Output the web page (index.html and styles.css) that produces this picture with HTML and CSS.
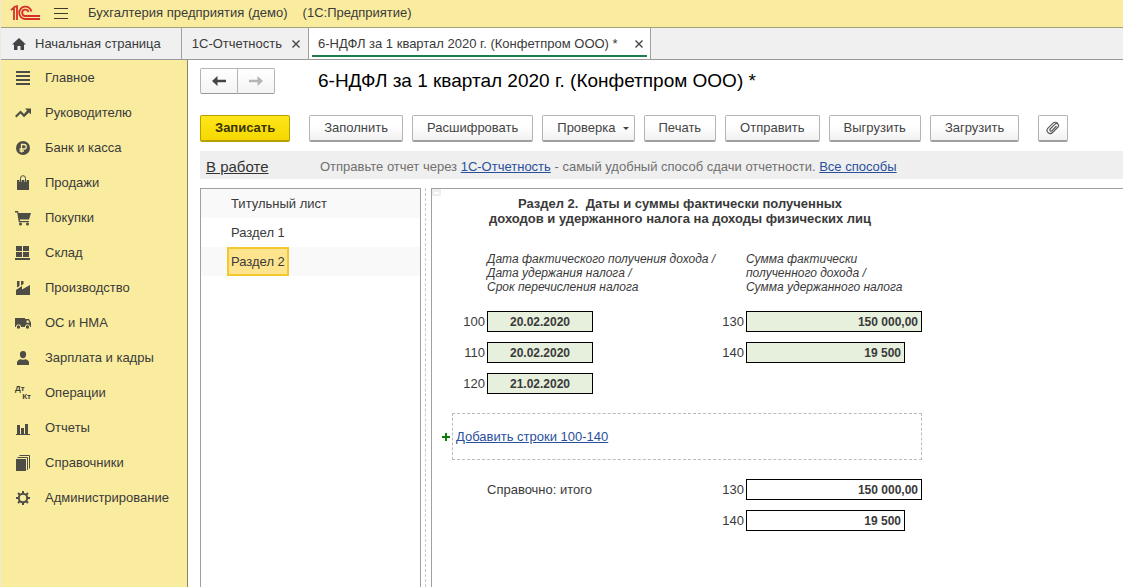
FILE: index.html
```html
<!DOCTYPE html>
<html lang="ru">
<head>
<meta charset="utf-8">
<title>Бухгалтерия предприятия (демо)</title>
<link rel="stylesheet" href="styles.css">
</head>
<body>
<div class="app">
  <header class="titlebar">
    <svg class="logo" width="31" height="16" viewBox="0 0 31 16" fill="none" stroke="#d5302a" stroke-width="1.800" aria-label="1С" role="img">
      <path d="M1 5.200L4 2.500V15M4 2.200L7 1.200V15"/>
      <path d="M21.500 6.500A6.200 6.200 0 1 0 15.500 14H30"/>
      <path d="M18.500 7A3.200 3.200 0 1 0 15.500 11H30"/>
    </svg>
    <button class="burger" aria-label="Главное меню">
      <svg width="14" height="12" viewBox="0 0 14 12" stroke="#3d3a2c"><path d="M0 1.500h14M0 6.500h14M0 11.500h14"/></svg>
    </button>
    <span class="app-name">Бухгалтерия предприятия (демо)</span>
    <span>(1С:Предприятие)</span>
  </header>

  <nav class="tabs">
    <a class="tab tab-home" href="#">
      <svg width="14" height="12" viewBox="0 0 14 12" fill="#444"><path d="M7 0L14 6.500H12V12H8.500V8H5.500V12H2V6.500H0Z"/></svg>
      Начальная страница
    </a>
    <div class="tab tab-report"><a href="#">1С-Отчетность</a><button class="close" aria-label="Закрыть 1С-Отчетность"><svg width="8" height="8" viewBox="0 0 8 8" stroke="#444" stroke-width="1.400"><path d="M.5.5l7 7M7.500.5l-7 7"/></svg></button></div>
    <div class="tab tab-active"><a href="#">6-НДФЛ за 1 квартал 2020 г. (Конфетпром ООО) *</a><button class="close" aria-label="Закрыть 6-НДФЛ"><svg width="8" height="8" viewBox="0 0 8 8" stroke="#444" stroke-width="1.400"><path d="M.5.5l7 7M7.500.5l-7 7"/></svg></button></div>
  </nav>

  <div class="body">
    <nav class="sidebar">
      <a href="#"><svg class="icon" viewBox="0 0 16 16"><path d="M1 1h14v2H1zM1 5h14v2H1zM1 9h14v2H1zM1 13h14v2H1z"/></svg>Главное</a>
      <a href="#"><svg class="icon" viewBox="0 0 16 16"><path d="M0 11L5.500 5.500L9 9L12 5.500L10 3.500H16V9.500L14 7.500L9 12.200L5.500 8.600L1.500 12.600Z"/></svg>Руководителю</a>
      <a href="#"><svg class="icon" viewBox="0 0 16 16"><circle cx="8" cy="8" r="7"/><path d="M6.500 12.500V4.500H9a2.200 2.200 0 0 1 0 4.500H4.500M4.500 11H9" fill="none" stroke="#faec9f" stroke-width="1.300"/></svg>Банк и касса</a>
      <a href="#"><svg class="icon" viewBox="0 0 16 16"><path d="M2 5h12v10H2z"/><path d="M5.500 7V3.500a2.500 2.500 0 0 1 5 0V7" fill="none" stroke="#faec9f" stroke-width="2.200"/><path d="M5.500 7V3.200a2.500 2.500 0 0 1 5 0V7" fill="none" stroke="#4d4d45" stroke-width="1"/></svg>Продажи</a>
      <a href="#"><svg class="icon" viewBox="0 0 16 16"><path d="M0 1h3l.6 2H16l-2 6.500H4.800L5 11h9v1.300H3.800L2.200 2.400H0z"/><circle cx="5.500" cy="14" r="1.500"/><circle cx="12.500" cy="14" r="1.500"/></svg>Покупки</a>
      <a href="#"><svg class="icon" viewBox="0 0 16 16"><path d="M1 1h6v5H1zM8 1h6v5H8zM1 7h6v5H1zM8 7h6v5H8zM0 13h15v2H0z"/></svg>Склад</a>
      <a href="#"><svg class="icon" viewBox="0 0 16 16"><path d="M1 15V10L7 6V9.500L15 5V15zM2 1h2.500v5L2 7.500zM6 1h2.500v3L6 5.500z"/></svg>Производство</a>
      <a href="#"><svg class="icon" viewBox="0 0 16 16"><path d="M0 3h10v9H0zM10 4h4l2 3.500V12h-6z"/><path d="M11.500 5.500h2l1 2.200h-3z" fill="#faec9f"/><g stroke="#faec9f"><circle cx="3.500" cy="12" r="2.200"/><circle cx="12.500" cy="12" r="2.200"/></g></svg>ОС и НМА</a>
      <a href="#"><svg class="icon" viewBox="0 0 16 16"><path d="M8 1C10.500 1 11.500 3 11 5.200C10.500 7.400 9.800 8.200 8 8.200S5.500 7.400 5 5.200C4.500 3 5.500 1 8 1zM2 15v-2.500C2 10.500 4 9.500 6 9.200Q8 10.400 10 9.200C12 9.500 14 10.500 14 12.500V15z"/></svg>Зарплата и кадры</a>
      <a href="#"><span class="icon dtkt"><b>Дт</b><b class="kt">Кт</b></span>Операции</a>
      <a href="#"><svg class="icon" viewBox="0 0 16 16"><path d="M1 14h14v1H1zM2 5h3v9H2zM6 8h3v6H6zM10 4h3v10h-3z"/></svg>Отчеты</a>
      <a href="#"><svg class="icon" viewBox="0 0 16 16"><path d="M1 4h10v12H1z"/><path d="M2.500 2.500h10V15M4.500.5h10V13.500" fill="none" stroke="#4d4d45"/></svg>Справочники</a>
      <a href="#"><svg class="icon" viewBox="0 0 16 16"><g fill="none" stroke="#4d4d45"><circle cx="8" cy="8" r="4.200" stroke-width="2"/><path d="M8 1v2.500M8 12.500V15M1 8h2.500M12.500 8H15M3 3l2 2M11 11l2 2M13 3l-2 2M5 11l-2 2" stroke-width="2"/></g></svg>Администрирование</a>
    </nav>

    <main class="main">
      <div class="heading">
        <div class="history">
          <button aria-label="Назад"><svg width="14" height="10" viewBox="0 0 14 10" fill="#444"><path d="M0 5L5.500 0V3.700H14V6.300H5.500V10Z"/></svg></button>
          <button aria-label="Вперед"><svg width="14" height="10" viewBox="0 0 14 10" fill="#b5b5b5"><path d="M14 5L8.500 0V3.700H0V6.300H8.500V10Z"/></svg></button>
        </div>
        <h1>6-НДФЛ за 1 квартал 2020 г. (Конфетпром ООО) *</h1>
      </div>

      <div class="toolbar">
        <button class="btn primary">Записать</button>
        <div class="group">
          <button class="btn">Заполнить</button>
          <button class="btn">Расшифровать</button>
          <button class="btn menu">Проверка<span class="caret"></span></button>
          <button class="btn">Печать</button>
          <button class="btn">Отправить</button>
          <button class="btn">Выгрузить</button>
          <button class="btn">Загрузить</button>
        </div>
        <button class="btn attach" aria-label="Присоединенные файлы"><svg width="14" height="14" viewBox="0 0 14 14" fill="none" stroke="#555" stroke-width="1.100"><path d="M10.500 5L6 9.700A1.200 1.200 0 0 1 4.200 8L9 3.200A2 2 0 0 1 12 6L6.500 11.500A3.100 3.100 0 0 1 2 7.200L7 2.200A3.300 3.300 0 0 1 12 2.500"/></svg></button>
      </div>

      <div class="status">
        <a class="state" href="#">В работе</a>
        <p>Отправьте отчет через <a href="#">1С-Отчетность</a> - самый удобный способ сдачи отчетности. <a href="#">Все способы</a></p>
      </div>

      <div class="panes">
        <nav class="sections">
          <a href="#"><span>Титульный лист</span></a>
          <a href="#"><span>Раздел 1</span></a>
          <a href="#" class="selected" aria-current="page"><span>Раздел 2</span></a>
        </nav>
        <div class="splitter"></div>
        <section class="sheet">
          <button class="collapse" aria-label="Свернуть"></button>
          <h2>Раздел 2.&nbsp; Даты и суммы фактически полученных<br>доходов и удержанного налога на доходы физических лиц</h2>
          <form class="fields">
            <p class="hint hint-date">Дата фактического получения дохода /<br>Дата удержания налога /<br>Срок перечисления налога</p>
            <p class="hint">Сумма фактически<br>полученного дохода /<br>Сумма удержанного налога</p>
            <label for="f100">100</label><input id="f100" class="date" value="20.02.2020">
            <label for="f130">130</label><input id="f130" value="150 000,00">
            <label for="f110">110</label><input id="f110" class="date" value="20.02.2020">
            <label for="f140">140</label><input id="f140" class="short" value="19 500">
            <label for="f120">120</label><input id="f120" class="date" value="21.02.2020">
          </form>
          <div class="add">
            <svg width="8" height="8" viewBox="0 0 8 8" stroke="#0b7d0b" stroke-width="2"><path d="M4 0v8M0 4h8"/></svg>
            <div class="add-box"><a href="#">Добавить строки 100-140</a></div>
          </div>
          <form class="fields totals">
            <span class="caption">Справочно: итого</span>
            <label for="t130">130</label><input id="t130" value="150 000,00" readonly>
            <label for="t140" class="second">140</label><input id="t140" class="short" value="19 500" readonly>
          </form>
        </section>
      </div>
    </main>
  </div>
</div>
</body>
</html>
```
FILE: styles.css
```css
* { box-sizing: border-box; }

body {
  margin: 0;
  font: 13px/16px "Liberation Sans", Arial, sans-serif;
  color: #3a3a3a;
  background: #fff;
}

h1, h2, p { margin: 0; }
a { color: inherit; text-decoration: none; }
button, input { font: inherit; color: inherit; }
button { margin: 0; cursor: pointer; }
svg { display: block; flex: none; }

.app {
  display: flex;
  flex-direction: column;
  min-height: 100vh;
  border-left: 1px solid #eeeadb;
}

.titlebar {
  display: flex;
  align-items: center;
  height: 28px;
  padding: 0 9px 2px;
  background: #faec9f;
  border-bottom: 1px solid #a8a07a;
  white-space: nowrap;
}
.burger {
  padding: 0;
  margin: 0 20px 0 13px;
  border: 0;
  background: none;
}
.app-name { margin-right: 15px; }

.tabs {
  display: flex;
  height: 32px;
  background: #f0f0f0;
  border-bottom: 1px solid #999;
  white-space: nowrap;
}
.tab {
  display: flex;
  align-items: center;
  justify-content: space-between;
  border-right: 1px solid #a0a0a0;
}
.tab-home { padding: 0 20px 0 11px; gap: 9px; }
.tab-report { padding: 0 8px 0 10px; gap: 10px; }
.tab-active {
  position: relative;
  padding: 0 7px 0 9px;
  gap: 17px;
  background: #fff;
}
.tab-active::after {
  content: "";
  position: absolute;
  inset: auto 3px 2px;
  height: 2px;
  background: #1f7d4b;
}
.close { padding: 0; border: 0; background: none; }

.body { display: flex; flex: 1; }

.sidebar {
  flex: none;
  width: 187px;
  background: #faec9f;
  border-right: 1px solid #8c8660;
}
.sidebar a {
  display: flex;
  align-items: center;
  gap: 14px;
  height: 35px;
  padding-left: 14px;
}
.icon { flex: none; width: 16px; height: 16px; fill: #4d4d45; }
.dtkt {
  display: flex;
  flex-direction: column;
  font-size: 8px;
  line-height: 8px;
}
.kt { align-self: flex-end; }

.main {
  display: flex;
  flex-direction: column;
  flex: 1;
  min-width: 0;
  padding: 8px 0 0 12px;
}

.heading { display: flex; align-items: center; gap: 43px; height: 26px; }
.history { display: flex; }
.history button {
  display: flex;
  align-items: center;
  justify-content: center;
  width: 38px;
  height: 26px;
  padding: 0;
  border: 1px solid #b4b4b4;
  border-bottom-color: #999;
  border-radius: 2px 0 0 2px;
  background: linear-gradient(#fff, #f3f3f3);
}
.history button + button { width: 37px; border-left: 0; border-radius: 0 2px 2px 0; }
h1 { font-size: 19px; line-height: 24px; font-weight: normal; color: #000; white-space: nowrap; }

.toolbar { display: flex; gap: 19px; margin-top: 21px; }
.group { display: flex; gap: 9px; }
.btn {
  height: 27px;
  padding: 0 14px;
  border: 1px solid #b4b4b4;
  border-bottom: 2px solid #a0a0a0;
  border-radius: 2px;
  background: linear-gradient(#fff 40%, #f1f1f1);
  color: #444;
  white-space: nowrap;
}
.primary {
  border-color: #b5a000;
  background: linear-gradient(#ffe61a, #f5d800);
  color: #3a3500;
  font-weight: bold;
}
.menu { display: flex; align-items: center; gap: 7px; padding-right: 5px; }
.caret { border: 3px solid transparent; border-top-color: #444; border-bottom: 0; }
.attach { padding: 0 7px; }

.status {
  display: flex;
  align-items: center;
  height: 28px;
  margin-top: 9px;
  padding: 3px 6px 0;
  background: #efefef;
  color: #707070;
  white-space: nowrap;
}
.status a { color: #2a509c; text-decoration: underline; }
.status .state { width: 114px; font-size: 15px; color: #333; }

.panes { display: flex; flex: 1; margin-top: 9px; }
.sections {
  flex: none;
  width: 221px;
  border: 1px solid #a0a0a0;
  border-bottom: 0;
}
.sections a { display: flex; height: 29px; padding-left: 26px; }
.sections a:nth-child(odd) { background: #f9f9f9; }
.sections span { padding: 5px 2px 4px; border: 2px solid transparent; }
.sections .selected span { background: #ffe48f; border-color: #f3c72e; }
.splitter { width: 6px; margin: 0 0 0 4px; border-left: 1px dashed #c8c8c8; }

.sheet {
  position: relative;
  flex: 1;
  min-width: 0;
  padding-top: 7px;
  border: solid #a0a0a0;
  border-width: 1px 0 0 1px;
}
.collapse {
  position: absolute;
  top: 0;
  left: 0;
  width: 9px;
  height: 7px;
  padding: 0;
  border: solid #eee;
  border-width: 3px 2px 2px;
  background: #fff;
}
h2 {
  width: 496px;
  font-size: 13px;
  line-height: 15px;
  text-align: center;
  white-space: nowrap;
}
.fields {
  display: grid;
  grid-template-columns: 53px 106px 149px 176px;
  column-gap: 2px;
  row-gap: 10px;
  margin-top: 26px;
}
.hint {
  padding-bottom: 7px;
  font-size: 12px;
  line-height: 14px;
  font-style: italic;
  white-space: nowrap;
}
.hint-date { grid-column: 2 / 4; }
.fields label { line-height: 21px; text-align: right; }
.fields input {
  width: 100%;
  height: 21px;
  padding: 0 3px;
  border: 1px solid #000;
  border-radius: 0;
  background: #e6f0dc;
  font-size: 12px;
  font-weight: bold;
  text-align: right;
}
.fields .date { text-align: center; }
.fields .short { width: 159px; }

.add { display: flex; align-items: center; gap: 2px; margin: 19px 0 0 10px; }
.add-box {
  width: 470px;
  padding: 15px 3px 14px;
  border: 1px dashed #bbb;
}
.add-box a { color: #2a509c; text-decoration: underline; }

.fields.totals { margin-top: 19px; }
.caption { grid-column: 2; line-height: 21px; white-space: nowrap; }
.second { grid-column: 3; }
.totals input { background: #fff; }
```
